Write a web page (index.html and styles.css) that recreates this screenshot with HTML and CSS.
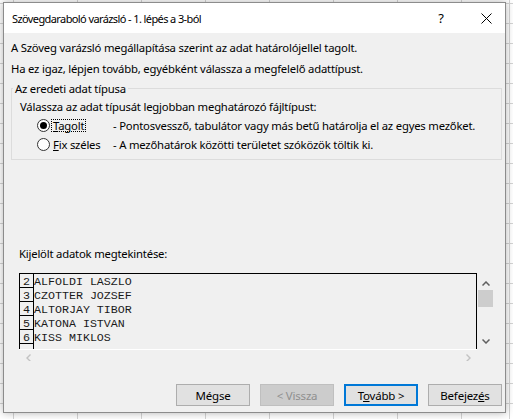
FILE: index.html
```html
<!DOCTYPE html>
<html lang="hu">
<head>
    <meta charset="UTF-8">
    <title>Szövegdaraboló varázsló</title>
    <link rel="stylesheet" href="styles.css">
</head>
<body>
    <div class="window">
        <div class="titlebar">
            <span class="title">Szövegdaraboló varázsló - 1. lépés a 3-ból</span>
            <span class="tb-help">?</span>
            <span class="tb-close">
                <svg width="11" height="11" viewBox="0 0 11 11"><path d="M0.5 0.5L10.5 10.5M10.5 0.5L0.5 10.5" stroke="#000" stroke-width="1" fill="none"/></svg>
            </span>
        </div>
        <div class="content">
            <p class="intro">A Szöveg varázsló megállapítása szerint az adat határolójellel tagolt.</p>
            <p class="intro">Ha ez igaz, lépjen tovább, egyébként válassza a megfelelő adattípust.</p>

            <fieldset class="group">
                <legend>Az eredeti adat típusa</legend>
                <div class="group-hint">Válassza az adat típusát legjobban meghatározó fájltípust:</div>
                <div class="option">
                    <span class="radio checked"></span>
                    <span class="opt-label"><span class="focus"><u>T</u>agolt</span></span>
                    <span class="opt-desc">- Pontosvessző, tabulátor vagy más betű határolja el az egyes mezőket.</span>
                </div>
                <div class="option">
                    <span class="radio"></span>
                    <span class="opt-label"><u>F</u>ix széles</span>
                    <span class="opt-desc">- A mezőhatárok közötti területet szóközök töltik ki.</span>
                </div>
            </fieldset>

            <div class="preview-label">Kijelölt adatok megtekintése:</div>
            <div class="preview">
                <div class="preview-main">
                    <div class="grid">
                        <div class="row"><span class="num">2</span><span class="cell">ALFOLDI LASZLO</span></div>
                        <div class="row"><span class="num">3</span><span class="cell">CZOTTER JOZSEF</span></div>
                        <div class="row"><span class="num">4</span><span class="cell">ALTORJAY TIBOR</span></div>
                        <div class="row"><span class="num">5</span><span class="cell">KATONA ISTVAN</span></div>
                        <div class="row"><span class="num">6</span><span class="cell">KISS MIKLOS</span></div>
                        <div class="row"><span class="num"></span><span class="cell"></span></div>
                    </div>
                    <div class="hscroll">
                        <svg width="5" height="8" viewBox="0 0 5 8"><path d="M4.5 0.5L1 4L4.5 7.5" stroke="#c2c2c2" stroke-width="1.4" fill="none"/></svg>
                        <svg width="5" height="8" viewBox="0 0 5 8"><path d="M0.5 0.5L4 4L0.5 7.5" stroke="#c2c2c2" stroke-width="1.4" fill="none"/></svg>
                    </div>
                </div>
                <div class="vscroll">
                    <svg class="arrow-up" width="8" height="5" viewBox="0 0 8 5"><path d="M0.5 4.5L4 1L7.5 4.5" stroke="#606060" stroke-width="1.5" fill="none"/></svg>
                    <div class="thumb"></div>
                    <svg class="arrow-down" width="8" height="5" viewBox="0 0 8 5"><path d="M0.5 0.5L4 4L7.5 0.5" stroke="#606060" stroke-width="1.5" fill="none"/></svg>
                </div>
            </div>

            <div class="buttons">
                <button class="btn">Mégse</button>
                <button class="btn disabled">&lt; Vissza</button>
                <button class="btn default">T<u>o</u>vább &gt;</button>
                <button class="btn">Befejez<u>é</u>s</button>
            </div>
        </div>
    </div>
</body>
</html>
```

FILE: styles.css
```css
body{
    margin: 0;
    width: 513px;
    height: 419px;
    overflow: hidden;
    background-color: #fff;
    background-image:
        linear-gradient(to right, #d4d4d4 1px, transparent 1px),
        linear-gradient(to bottom, #d4d4d4 1px, transparent 1px),
        linear-gradient(#d4d4d4, #d4d4d4);
    background-size: 64px 100%, 100% 20px, 1px 100%;
    background-position: 13px 0, 0 3px, 509px 0;
    background-repeat: repeat, repeat, no-repeat;
    font-family: "Segoe UI", "Noto Sans", sans-serif;
    font-size: 11.3px;
    letter-spacing: -0.2px;
    color: #000;
}

.window{
    margin: 2px 0 0 3px;
    width: 503px;
    height: 411px;
    box-sizing: border-box;
    border: 1px solid #8c8c8c;
    background: #f0f0f0;
    box-shadow: 0 0 8px rgba(0, 0, 0, 0.3);
    display: flex;
    flex-direction: column;
}

/* title bar */
.titlebar{
    height: 30px;
    background: #fff;
    display: flex;
    align-items: center;
}
.title{
    padding-left: 8px;
    font-size: 11px;
    letter-spacing: -0.6px;
}
.tb-help{
    margin-left: auto;
    width: 20px;
    text-align: center;
    font-size: 13px;
    letter-spacing: 0;
}
.tb-close{
    margin: 0 13px 0 30px;
    width: 11px;
    height: 11px;
    display: flex;
}

/* body */
.content{
    flex: 1;
    padding: 4px 3px 0 7px;
}
.intro{
    margin: 0;
    line-height: 21px;
}

.group{
    margin: 1px 0 0 0;
    padding: 1px 8px 5px 8px;
    min-width: 0;
    border: 1px solid #dcdcdc;
}
.group legend{
    margin-left: -7px;
    padding: 0 2px;
    line-height: 17px;
}
.group-hint{
    line-height: 18px;
}
.option{
    display: grid;
    grid-template-columns: 13px 57px auto;
    column-gap: 3px;
    align-items: center;
    height: 19px;
    padding-left: 17px;
}
.radio{
    width: 13px;
    height: 13px;
    box-sizing: border-box;
    border: 1px solid #333;
    border-radius: 50%;
    background: #fff;
    display: flex;
    align-items: center;
    justify-content: center;
}
.radio.checked::after{
    content: "";
    width: 7px;
    height: 7px;
    border-radius: 50%;
    background: #000;
}
.focus{
    display: inline-block;
    margin-left: -2px;
    padding: 0 1px;
    line-height: 11px;
    border: 1px dotted #000;
}

/* preview */
.preview-label{
    margin: 85px 0 10px 8px;
    line-height: 18px;
}
.preview{
    margin-left: 8px;
    height: 88px;
    display: flex;
    align-items: flex-start;
}
.preview-main{
    width: 458px;
    height: 88px;
    overflow: hidden;
}
.grid{
    height: 75px;
    overflow: hidden;
    border: 1px solid #000;
    border-bottom: none;
    font-family: "Liberation Mono", "Courier New", monospace;
    font-size: 11.65px;
    letter-spacing: 0;
    color: #1a1a1a;
}
.row{
    display: flex;
    height: 14px;
}
.num{
    width: 14px;
    box-sizing: border-box;
    border-right: 1px solid #000;
    border-bottom: 1px solid #000;
    text-align: center;
    line-height: 15px;
}
.cell{
    line-height: 15px;
}
.hscroll{
    height: 12px;
    border-top: 1px solid #fff;
    display: flex;
    justify-content: space-between;
    align-items: flex-end;
    padding: 0 6px 0 7px;
}

.vscroll{
    width: 15px;
    height: 76px;
    margin-left: 1px;
    display: flex;
    flex-direction: column;
    align-items: center;
}
.arrow-up{
    margin-top: 8px;
}
.thumb{
    width: 15px;
    height: 17px;
    margin-top: 4px;
    background: #cdcdcd;
}
.arrow-down{
    margin-top: 32px;
}

/* buttons */
.buttons{
    margin-top: 23px;
    display: flex;
    justify-content: flex-end;
    gap: 10px;
}
.btn{
    width: 74px;
    height: 22px;
    box-sizing: border-box;
    border: 1px solid #adadad;
    background: #e1e1e1;
    font-family: inherit;
    font-size: 11.5px;
    letter-spacing: -0.2px;
    color: #000;
    padding: 0;
}
.btn.disabled{
    background: #cccccc;
    border-color: #bfbfbf;
    color: #8f8f8f;
}
.btn.default{
    border: 2px solid #0078d7;
}
```
